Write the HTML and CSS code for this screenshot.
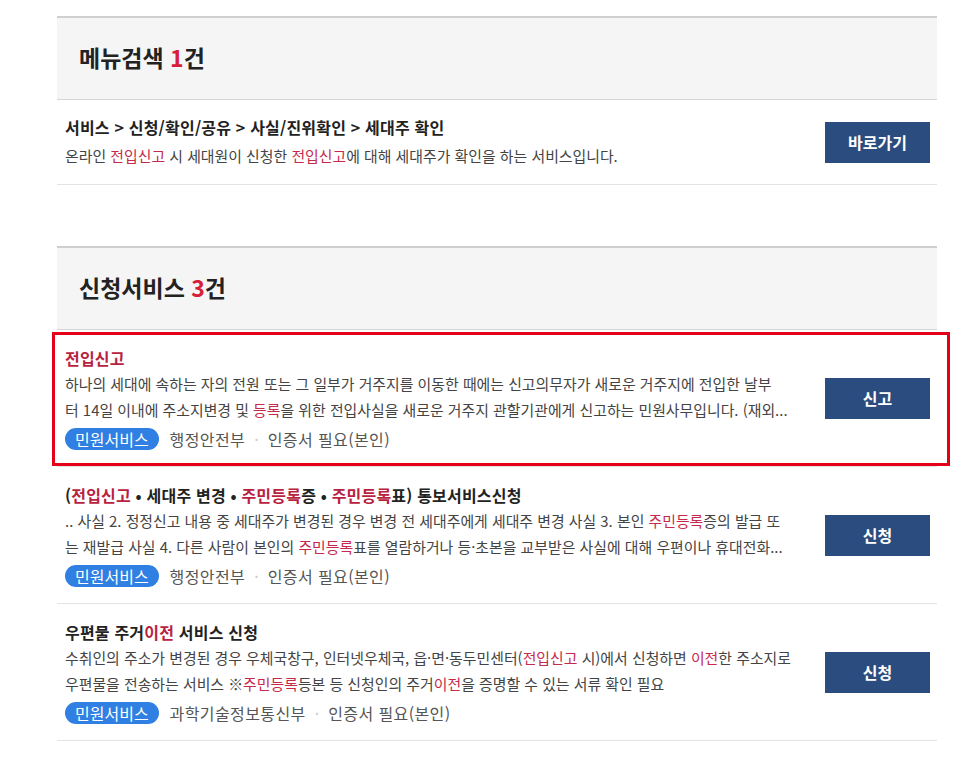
FILE: index.html
```html
<!DOCTYPE html>
<html lang="ko">
<head>
    <meta charset="UTF-8">
    <meta name="viewport" content="width=device-width, initial-scale=1.0">
    <title>통합검색 결과</title>
    <link rel="stylesheet" href="styles.css">
</head>
<body>
    <div id="result-wrap">
        <!-- 메뉴검색 -->
        <div class="result-section first">
            <h2 class="section-title">메뉴검색 <em>1</em>건</h2>
            <ul class="result-list">
                <li class="result-item menu-item">
                    <div class="result-body">
                        <p class="result-title">서비스 &gt; 신청/확인/공유 &gt; 사실/진위확인 &gt; 세대주 확인</p>
                        <p class="result-desc">온라인 <span class="hl">전입신고</span> 시 세대원이 신청한 <span class="hl">전입신고</span>에 대해 세대주가 확인을 하는 서비스입니다.</p>
                    </div>
                    <a class="result-button" href="#">바로가기</a>
                </li>
            </ul>
        </div>

        <!-- 신청서비스 -->
        <div class="result-section">
            <h2 class="section-title">신청서비스 <em>3</em>건</h2>
            <ul class="result-list">
                <li class="result-item is-marked">
                    <div class="result-body">
                        <p class="result-title"><span class="hl">전입신고</span></p>
                        <p class="result-desc">하나의 세대에 속하는 자의 전원 또는 그 일부가 거주지를 이동한 때에는 신고의무자가 새로운 거주지에 전입한 날부<br>터 14일 이내에 주소지변경 및 <span class="hl">등록</span>을 위한 전입사실을 새로운 거주지 관할기관에게 신고하는 민원사무입니다. (재외...</p>
                        <div class="result-meta">
                            <span class="badge">민원서비스</span>
                            <span class="meta-text">행정안전부</span>
                            <span class="meta-dot">·</span>
                            <span class="meta-text">인증서 필요(본인)</span>
                        </div>
                    </div>
                    <a class="result-button" href="#">신고</a>
                </li>
                <li class="result-item">
                    <div class="result-body">
                        <p class="result-title">(<span class="hl">전입신고</span> • 세대주 변경 • <span class="hl">주민등록</span>증 • <span class="hl">주민등록</span>표) 통보서비스신청</p>
                        <p class="result-desc">.. 사실 2. 정정신고 내용 중 세대주가 변경된 경우 변경 전 세대주에게 세대주 변경 사실 3. 본인 <span class="hl">주민등록</span>증의 발급 또<br>는 재발급 사실 4. 다른 사람이 본인의 <span class="hl">주민등록</span>표를 열람하거나 등·초본을 교부받은 사실에 대해 우편이나 휴대전화...</p>
                        <div class="result-meta">
                            <span class="badge">민원서비스</span>
                            <span class="meta-text">행정안전부</span>
                            <span class="meta-dot">·</span>
                            <span class="meta-text">인증서 필요(본인)</span>
                        </div>
                    </div>
                    <a class="result-button" href="#">신청</a>
                </li>
                <li class="result-item">
                    <div class="result-body">
                        <p class="result-title">우편물 주거<span class="hl">이전</span> 서비스 신청</p>
                        <p class="result-desc">수취인의 주소가 변경된 경우 우체국창구, 인터넷우체국, 읍·면·동두민센터(<span class="hl">전입신고</span> 시)에서 신청하면 <span class="hl">이전</span>한 주소지로<br>우편물을 전송하는 서비스 ※<span class="hl">주민등록</span>등본 등 신청인의 주거<span class="hl">이전</span>을 증명할 수 있는 서류 확인 필요</p>
                        <div class="result-meta">
                            <span class="badge">민원서비스</span>
                            <span class="meta-text">과학기술정보통신부</span>
                            <span class="meta-dot">·</span>
                            <span class="meta-text">인증서 필요(본인)</span>
                        </div>
                    </div>
                    <a class="result-button" href="#">신청</a>
                </li>
            </ul>
        </div>
    </div>
</body>
</html>
```

FILE: styles.css
```css
body {
    margin: 0;
    padding: 0;
    background-color: #fff;
    color: #222;
    font-family: "Noto Sans CJK KR", "Noto Sans", sans-serif;
}

#result-wrap {
    width: 880px;
    margin-left: 57px;
    padding-top: 16px;
}

.result-section {
    margin-top: 61px;
}

.result-section.first {
    margin-top: 0;
}

.section-title {
    margin: 0;
    height: 81px;
    line-height: 79px;
    padding-left: 22px;
    background-color: #f5f5f5;
    border-top: 2px solid #cfcfcf;
    border-bottom: 1px solid #d6d6d6;
    font-size: 23px;
    font-weight: bold;
    color: #222;
}

.section-title em {
    font-style: normal;
    color: #d6203a;
}

.result-list {
    list-style: none;
    margin: 0;
    padding: 0;
}

.result-item {
    position: relative;
    display: flex;
    align-items: center;
    justify-content: space-between;
    padding: 16px 7px 15px 8px;
    border-bottom: 1px solid #e3e3e3;
}

/* 강조 표시 (빨간 박스) */
.result-item.is-marked::after {
    content: "";
    position: absolute;
    left: -5px;
    right: -13px;
    top: 2px;
    bottom: 0;
    border: 3px solid #e50019;
    pointer-events: none;
}

.result-body {
    width: 760px;
}

.result-title {
    margin: 0;
    font-size: 16px;
    line-height: 24px;
    font-weight: bold;
    color: #222;
    letter-spacing: 0.2px;
}

.result-desc {
    margin: 1px 0 0;
    font-size: 14.9px;
    line-height: 26px;
    color: #444;
    white-space: nowrap;
}

.menu-item {
    padding-top: 15px;
}

.menu-item .result-desc {
    margin-top: 4px;
}

.hl {
    color: #c52a4c;
}

.result-title .hl {
    color: #b8223f;
}

.result-meta {
    display: flex;
    align-items: center;
    margin-top: 4px;
    height: 24px;
    font-size: 16px;
    color: #555;
}

.badge {
    display: inline-block;
    height: 22px;
    line-height: 22px;
    padding: 0 10px;
    border-radius: 11px;
    background-color: #2f80e2;
    color: #fff;
    margin-right: 11px;
}

.meta-text {
    letter-spacing: 0.4px;
}

.meta-dot {
    color: #ccc;
    margin: 0 9px;
}

.result-button {
    display: block;
    width: 105px;
    height: 41px;
    line-height: 41px;
    text-align: center;
    background-color: #2b4c7e;
    color: #fff;
    font-size: 16px;
    font-weight: bold;
    text-decoration: none;
}
```
